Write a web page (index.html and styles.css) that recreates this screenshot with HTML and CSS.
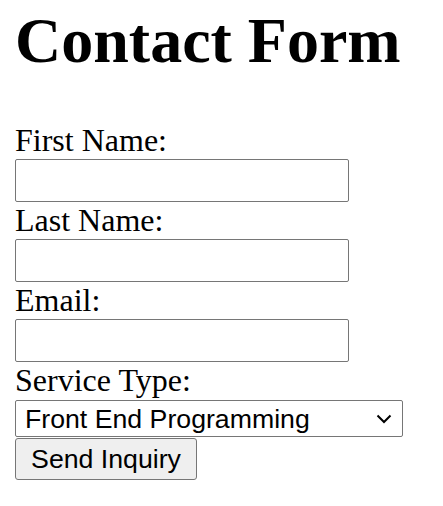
FILE: index.html
```html
<!DOCTYPE html>
<html>
<head>
<meta charset="utf-8">
<link rel="stylesheet" href="styles.css">
</head>
<body>
<h1 class="title">Contact Form</h1>
<form class="form">
  <label class="label" for="first">First Name:</label>
  <input class="field" type="text" id="first">
  <label class="label" for="last">Last Name:</label>
  <input class="field" type="text" id="last">
  <label class="label" for="email">Email:</label>
  <input class="field" type="email" id="email">
  <label class="label" for="service">Service Type:</label>
  <span class="select-wrap">
    <select class="select" id="service">
      <option>Front End Programming</option>
    </select>
    <svg class="chevron" width="16" height="10" viewBox="0 0 16 10"><path d="M1.5 1.5 L8 8 L14.5 1.5" fill="none" stroke="#000" stroke-width="2"/></svg>
  </span>
  <button class="button" type="button">Send Inquiry</button>
</form>
</body>
</html>
```
FILE: styles.css
```css
html, body {
  margin: 0;
  padding: 0;
  background: #fff;
}
body {
  padding: 0 15px;
  font-family: "Liberation Serif", "Times New Roman", serif;
  color: #000;
}
.title {
  font-size: 64px;
  font-weight: bold;
  margin: 4px 0 44px;
  line-height: 74px;
}
.form {
  display: flex;
  flex-direction: column;
  align-items: flex-start;
}
.label {
  font-size: 32px;
  line-height: 37px;
}
.field {
  box-sizing: border-box;
  width: 334px;
  height: 43px;
  margin: 0;
  border: 1px solid #767676;
  border-radius: 2px;
  padding: 2px 4px;
  font-family: "Liberation Sans", Arial, sans-serif;
  font-size: 26px;
  background: #fff;
}
.select-wrap {
  position: relative;
  display: block;
  width: 388px;
  margin-top: 1px;
}
.select {
  appearance: none;
  -webkit-appearance: none;
  box-sizing: border-box;
  width: 388px;
  height: 37px;
  margin: 0;
  border: 1px solid #767676;
  border-radius: 2px;
  padding: 0 0 0 9px;
  font-family: "Liberation Sans", Arial, sans-serif;
  font-size: 26.7px;
  color: #000;
  background: #fff;
}
.chevron {
  position: absolute;
  right: 11px;
  top: 14px;
  pointer-events: none;
}
.button {
  box-sizing: border-box;
  width: 182px;
  height: 42px;
  margin: 1px 0 0;
  border: 1px solid #767676;
  border-radius: 3px;
  padding: 0;
  background: #efefef;
  font-family: "Liberation Sans", Arial, sans-serif;
  font-size: 26.7px;
  color: #000;
}
```
